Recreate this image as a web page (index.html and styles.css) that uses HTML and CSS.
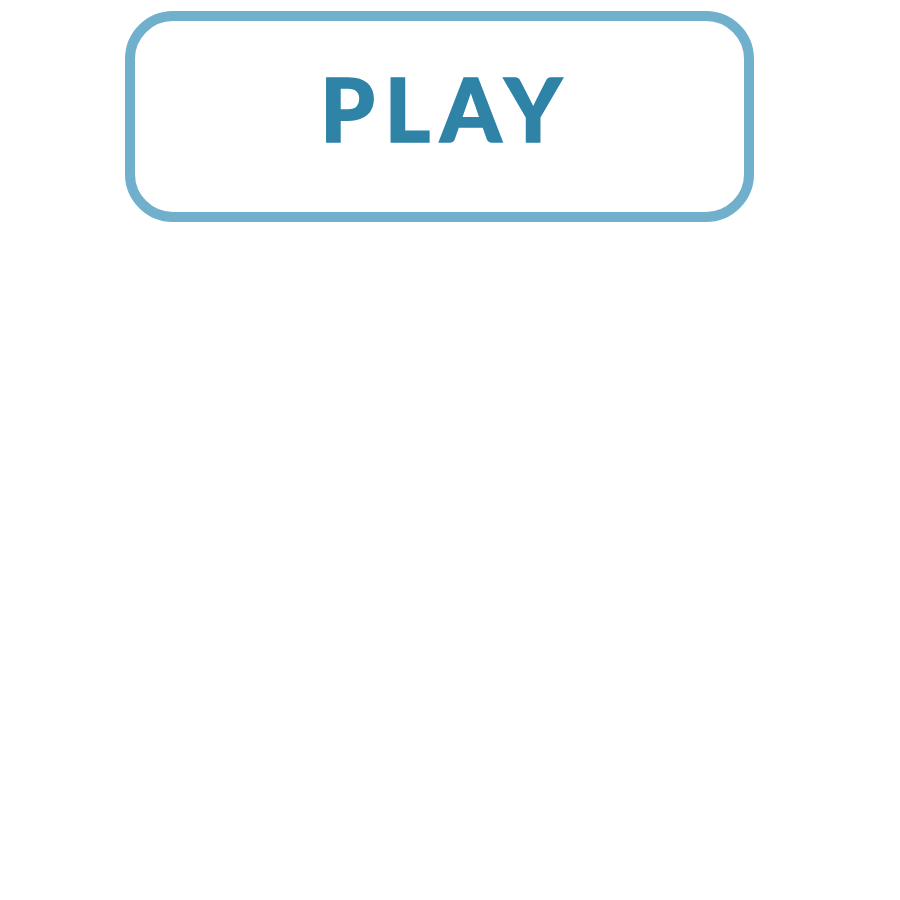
FILE: index.html
```html
<!DOCTYPE html>
<html>
<head>
<meta charset="utf-8">
<link rel="stylesheet" href="styles.css">
</head>
<body>
<div class="page">
  <button class="play-btn"><span class="label">PLAY</span></button>
</div>
</body>
</html>
```

FILE: styles.css
```css
html, body {
  margin: 0;
  padding: 0;
  background: #ffffff;
}
.page {
  padding: 11px 0 0 125px;
}
.play-btn {
  box-sizing: border-box;
  width: 629px;
  height: 211px;
  border: 10px solid #70b0cd;
  border-radius: 48px;
  background: #ffffff;
  display: flex;
  align-items: center;
  justify-content: center;
  padding: 0 0 17px 13px;
  margin: 0;
  cursor: pointer;
}
.label {
  font-family: Lato, "Liberation Sans", sans-serif;
  font-weight: 900;
  font-size: 87px;
  line-height: 1;
  color: #2e83a7;
  -webkit-text-stroke: 1.6px #2e83a7;
  letter-spacing: 10px;
}
```
